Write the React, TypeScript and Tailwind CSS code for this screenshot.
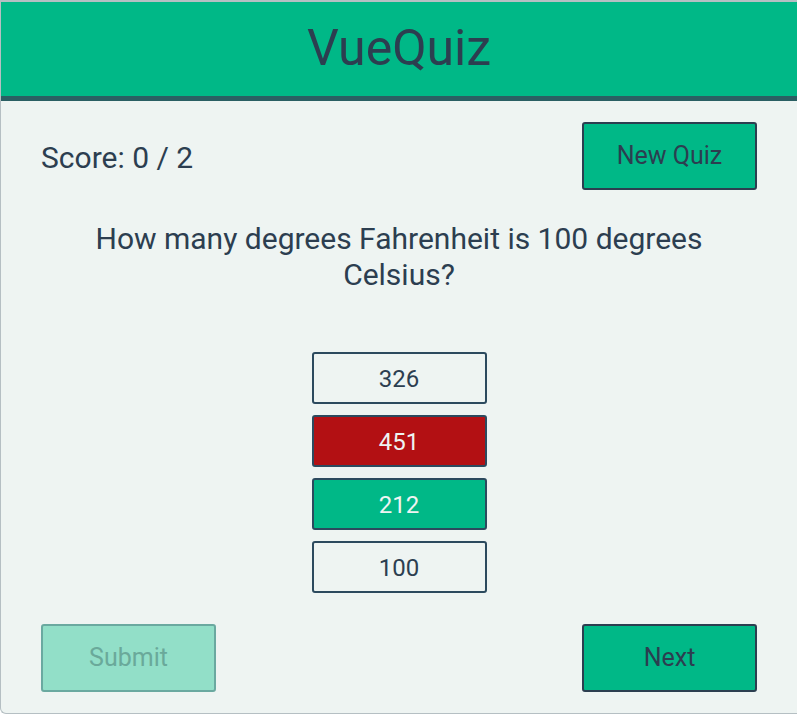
import React, { useState } from 'react';

const answers = ['326', '451', '212', '100'];
const correct = '212';

export default function App() {
  const [picked] = useState<string>('451');
  const [score] = useState(0);
  const total = 2;

  const answerClass = (a: string) => {
    if (a === correct) return 'bg-[#00b887] text-[#eef4f2]';
    if (a === picked) return 'bg-[#b31013] text-[#eef4f2]';
    return 'bg-transparent text-[#2c3e50]';
  };

  return (
    <div className="w-[797px] h-[714px] bg-white font-['Roboto',sans-serif]">
      <div className="w-full h-full flex flex-col border border-t-2 border-r-0 border-[#b5bfc3] rounded-bl-md overflow-hidden bg-[#eef4f2] text-[#2c3e50]">
        <header className="h-[99px] shrink-0 bg-[#00b887] border-b-[5px] border-[#2a5f63] flex items-center justify-center">
          <h1 className="text-[50px] leading-none pb-[2px]">VueQuiz</h1>
        </header>

        <div className="flex flex-col px-10">
          <div className="mt-[21px] h-[68px] flex items-center justify-between">
            <span className="text-[30px] pt-[3px]">
              Score: {score} / {total}
            </span>
            <button className="w-[175px] h-[68px] bg-[#00b887] border-2 border-[#2c3e50] rounded-[3px] text-[25px] text-[#2c3e50]">
              New Quiz
            </button>
          </div>

          <p className="mt-[31px] mx-auto max-w-[640px] text-center text-[30px] leading-[36px]">
            How many degrees Fahrenheit is 100 degrees Celsius?
          </p>

          <div className="mt-[59px] flex flex-col items-center gap-[11px]">
            {answers.map((a) => (
              <button
                key={a}
                className={`w-[175px] h-[52px] border-2 border-[#2c4a5e] rounded-[3px] text-[24px] pt-[1px] ${answerClass(a)}`}
              >
                {a}
              </button>
            ))}
          </div>

          <div className="mt-[31px] flex items-center justify-between">
            <button
              disabled
              className="w-[175px] h-[68px] bg-[#92dfc8] border-2 border-[#6aa9a0] rounded-[3px] text-[25px] text-[#6aa99a]"
            >
              Submit
            </button>
            <button className="w-[175px] h-[68px] bg-[#00b887] border-2 border-[#2c3e50] rounded-[3px] text-[25px] text-[#2c3e50]">
              Next
            </button>
          </div>
        </div>
      </div>
    </div>
  );
}
